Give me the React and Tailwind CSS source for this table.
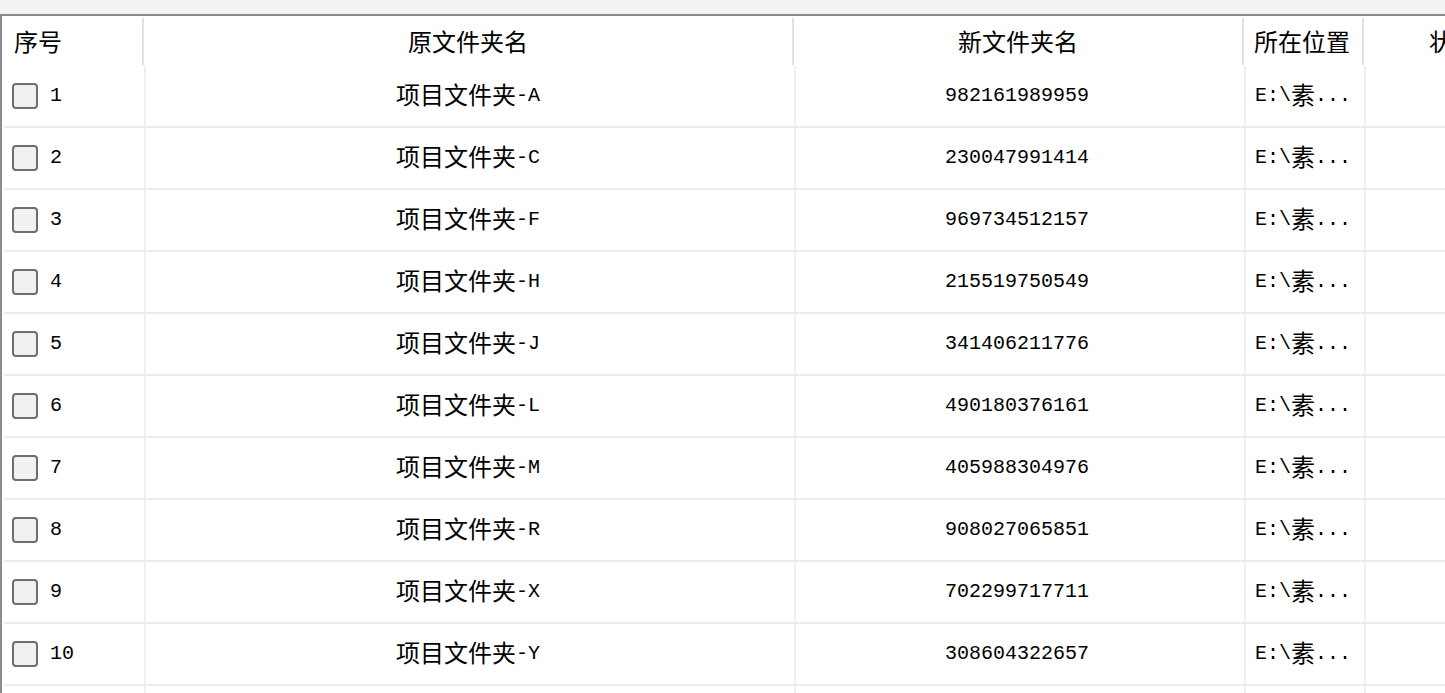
import React from "react";

const cjk = { fontFamily: '"Noto Sans CJK SC", "Noto Sans", sans-serif' };
const mono = { fontFamily: '"Liberation Mono", "Noto Sans CJK SC", monospace' };

const rows = [
  { id: 1, name: "A", code: "982161989959" },
  { id: 2, name: "C", code: "230047991414" },
  { id: 3, name: "F", code: "969734512157" },
  { id: 4, name: "H", code: "215519750549" },
  { id: 5, name: "J", code: "341406211776" },
  { id: 6, name: "L", code: "490180376161" },
  { id: 7, name: "M", code: "405988304976" },
  { id: 8, name: "R", code: "908027065851" },
  { id: 9, name: "X", code: "702299717711" },
  { id: 10, name: "Y", code: "308604322657" },
];

function HeaderCell({ width, children, className = "" }) {
  return (
    <div className={`flex shrink-0 ${width}`}>
      <div className={`flex flex-1 items-center text-[24px] text-black ${className}`} style={cjk}>
        {children}
      </div>
      <div className="mt-[2px] mb-px w-[2px] bg-[#e1e1e1]" />
    </div>
  );
}

function Cell({ width, children, className = "" }) {
  return (
    <div className={`flex shrink-0 border-r-2 border-[#efefef] ${width}`}>
      <div className={`flex flex-1 items-center ${className}`}>{children}</div>
    </div>
  );
}

function EmptyRow() {
  return (
    <div className="flex h-[62px] border-b-2 border-[#ececec]">
      <Cell width="w-[142px]" />
      <Cell width="w-[650px]" />
      <Cell width="w-[450px]" />
      <Cell width="w-[120px]" />
      <Cell width="w-[180px]" />
    </div>
  );
}

export default function App() {
  return (
    <div className="h-[693px] w-[1445px] overflow-hidden bg-[#f3f3f3] pt-[14px]">
      <div className="h-full border-l-2 border-t-2 border-[#878b94] bg-white">
        {/* header */}
        <div className="flex h-[50px] w-[1700px]">
          <HeaderCell width="w-[142px]" className="pl-[12px]">序号</HeaderCell>
          <HeaderCell width="w-[650px]" className="justify-center">原文件夹名</HeaderCell>
          <HeaderCell width="w-[450px]" className="justify-center">新文件夹名</HeaderCell>
          <HeaderCell width="w-[120px]" className="pl-[10px]">所在位置</HeaderCell>
          <HeaderCell width="w-[180px]" className="justify-center">状态</HeaderCell>
        </div>

        {/* body */}
        <div className="ml-[2px] w-[1700px]">
          {rows.map((row) => (
            <div key={row.id} className="flex h-[62px] border-b-2 border-[#ececec]">
              <Cell width="w-[142px]" className="pl-[8px]">
                <span className="h-[26px] w-[26px] rounded-[4px] border-2 border-[#6e6e6e] bg-[#f1f1f1]" />
                <span className="ml-[12px] text-[20px] text-black" style={mono}>
                  {row.id}
                </span>
              </Cell>
              <Cell width="w-[650px]" className="justify-center pr-[4px]">
                <span className="-translate-y-[2px] text-[24px] text-black" style={cjk}>项目文件夹</span>
                <span className="text-[20px] text-black" style={mono}>-{row.name}</span>
              </Cell>
              <Cell width="w-[450px]" className="justify-center pr-[6px]">
                <span className="text-[20px] text-black" style={mono}>{row.code}</span>
              </Cell>
              <Cell width="w-[120px]" className="pl-[9px]">
                <span className="text-[20px] text-black" style={mono}>E:\</span>
                <span className="-translate-y-[2px] text-[24px] text-black" style={cjk}>素</span>
                <span className="text-[20px] text-black" style={mono}>...</span>
              </Cell>
              <Cell width="w-[180px]" />
            </div>
          ))}
          <EmptyRow />
        </div>
      </div>
    </div>
  );
}
